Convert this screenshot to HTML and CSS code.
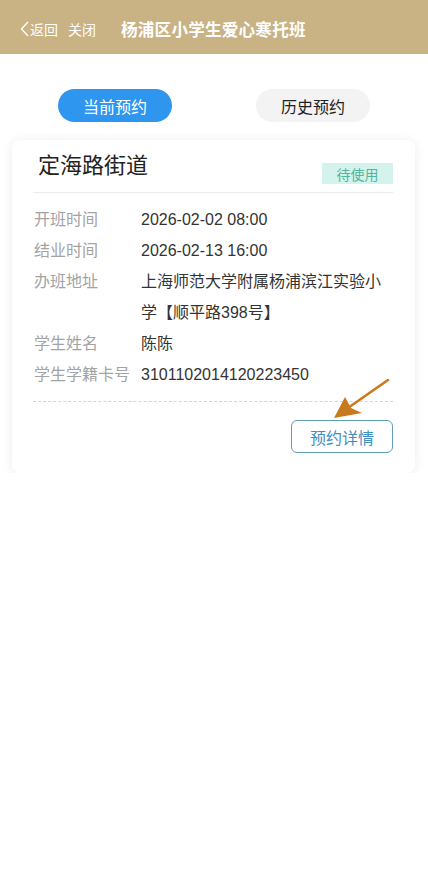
FILE: index.html
```html
<!DOCTYPE html>
<html lang="zh-CN">
<head>
<meta charset="utf-8">
<meta name="viewport" content="width=device-width, initial-scale=1">
<title>杨浦区小学生爱心寒托班</title>
<link rel="stylesheet" href="styles.css">
</head>
<body>
<header class="topbar">
  <span class="back">
    <svg class="chev" width="9" height="16" viewBox="0 0 9 16"><path d="M8 1 L1.5 8 L8 15" fill="none" stroke="#fff" stroke-width="1.4"/></svg>
    返回
  </span>
  <span class="close">关闭</span>
  <span class="title">杨浦区小学生爱心寒托班</span>
</header>

<nav class="tabs">
  <span class="tab active">当前预约</span>
  <span class="tab">历史预约</span>
</nav>

<section class="card">
  <div class="card-head">
    <h2 class="card-title">定海路街道</h2>
    <span class="badge">待使用</span>
  </div>
  <dl class="info">
    <div class="row"><dt>开班时间</dt><dd>2026-02-02 08:00</dd></div>
    <div class="row"><dt>结业时间</dt><dd>2026-02-13 16:00</dd></div>
    <div class="row"><dt>办班地址</dt><dd>上海师范大学附属杨浦滨江实验小学【顺平路398号】</dd></div>
    <div class="row"><dt>学生姓名</dt><dd>陈陈</dd></div>
    <div class="row"><dt>学生学籍卡号</dt><dd>3101102014120223450</dd></div>
  </dl>
  <div class="card-foot">
    <button class="detail-btn">预约详情</button>
  </div>
  <svg class="arrow" width="70" height="50" viewBox="0 0 70 50">
    <line x1="63" y1="8" x2="20" y2="38" stroke="#c97a1c" stroke-width="2.6" stroke-linecap="round"/>
    <polygon points="9,46 20,25 26,36 37,41" fill="#c97a1c"/>
  </svg>
</section>
</body>
</html>
```

FILE: styles.css
```css
* { box-sizing: border-box; }
html, body { margin: 0; padding: 0; }
body {
  background: #fff;
  font-family: "Liberation Sans", "Noto Sans CJK SC", sans-serif;
  color: #333;
  width: 428px;
}
.topbar {
  height: 54px;
  background: #c9b283;
  color: #fff;
  display: flex;
  align-items: center;
  padding: 4px 0 0 20px;
}
.back {
  display: flex;
  align-items: center;
  font-size: 14px;
  gap: 1px;
}
.chev { display: block; }
.close {
  font-size: 14px;
  margin-left: 10px;
}
.title {
  font-size: 16.6px;
  font-weight: 700;
  margin-left: 25px;
  letter-spacing: 0.2px;
}
.tabs {
  display: flex;
  padding: 35px 0 0 58px;
  gap: 84px;
}
.tab {
  width: 114px;
  height: 33px;
  border-radius: 17px;
  background: #f3f3f3;
  color: #222;
  font-size: 16px;
  display: flex;
  align-items: center;
  justify-content: center;
}
.tab.active {
  background: #2f96ef;
  color: #fff;
}
.card {
  position: relative;
  margin: 18px 13px 0 12px;
  background: #fff;
  border-radius: 8px;
  box-shadow: 0 1px 12px rgba(0,0,0,0.08);
  padding: 12px 22px 20px 21px;
}
.card-head {
  display: flex;
  justify-content: space-between;
  align-items: flex-start;
  height: 41px;
  border-bottom: 1px solid #ececec;
}
.card-title {
  margin: 0 0 0 5px;
  font-size: 22px;
  font-weight: 400;
  line-height: 28px;
  color: #222;
}
.badge {
  margin-top: 11px;
  height: 21px;
  width: 71px;
  background: #d3f3ec;
  color: #52b39f;
  font-size: 14px;
  display: flex;
  align-items: center;
  justify-content: center;
}
.info {
  margin: 0;
  padding: 11px 0 11px;
  border-bottom: 1px dashed #d6d6d6;
}
.row {
  display: flex;
  font-size: 16px;
  line-height: 31px;
}
.row dt {
  width: 108px;
  flex: none;
  color: #a3a3a3;
  padding-left: 1px;
  white-space: nowrap;
}
.row dd {
  margin: 0;
  color: #333;
  flex: 1;
}
.card-foot {
  display: flex;
  justify-content: flex-end;
  padding-top: 18px;
}
.detail-btn {
  width: 102px;
  height: 33px;
  border: 1px solid #5f9fb3;
  border-radius: 6px;
  background: #fff;
  color: #3f8ec0;
  font-family: inherit;
  font-size: 16px;
  padding: 0;
}
.arrow {
  position: absolute;
  left: 313px;
  top: 232px;
}
```
